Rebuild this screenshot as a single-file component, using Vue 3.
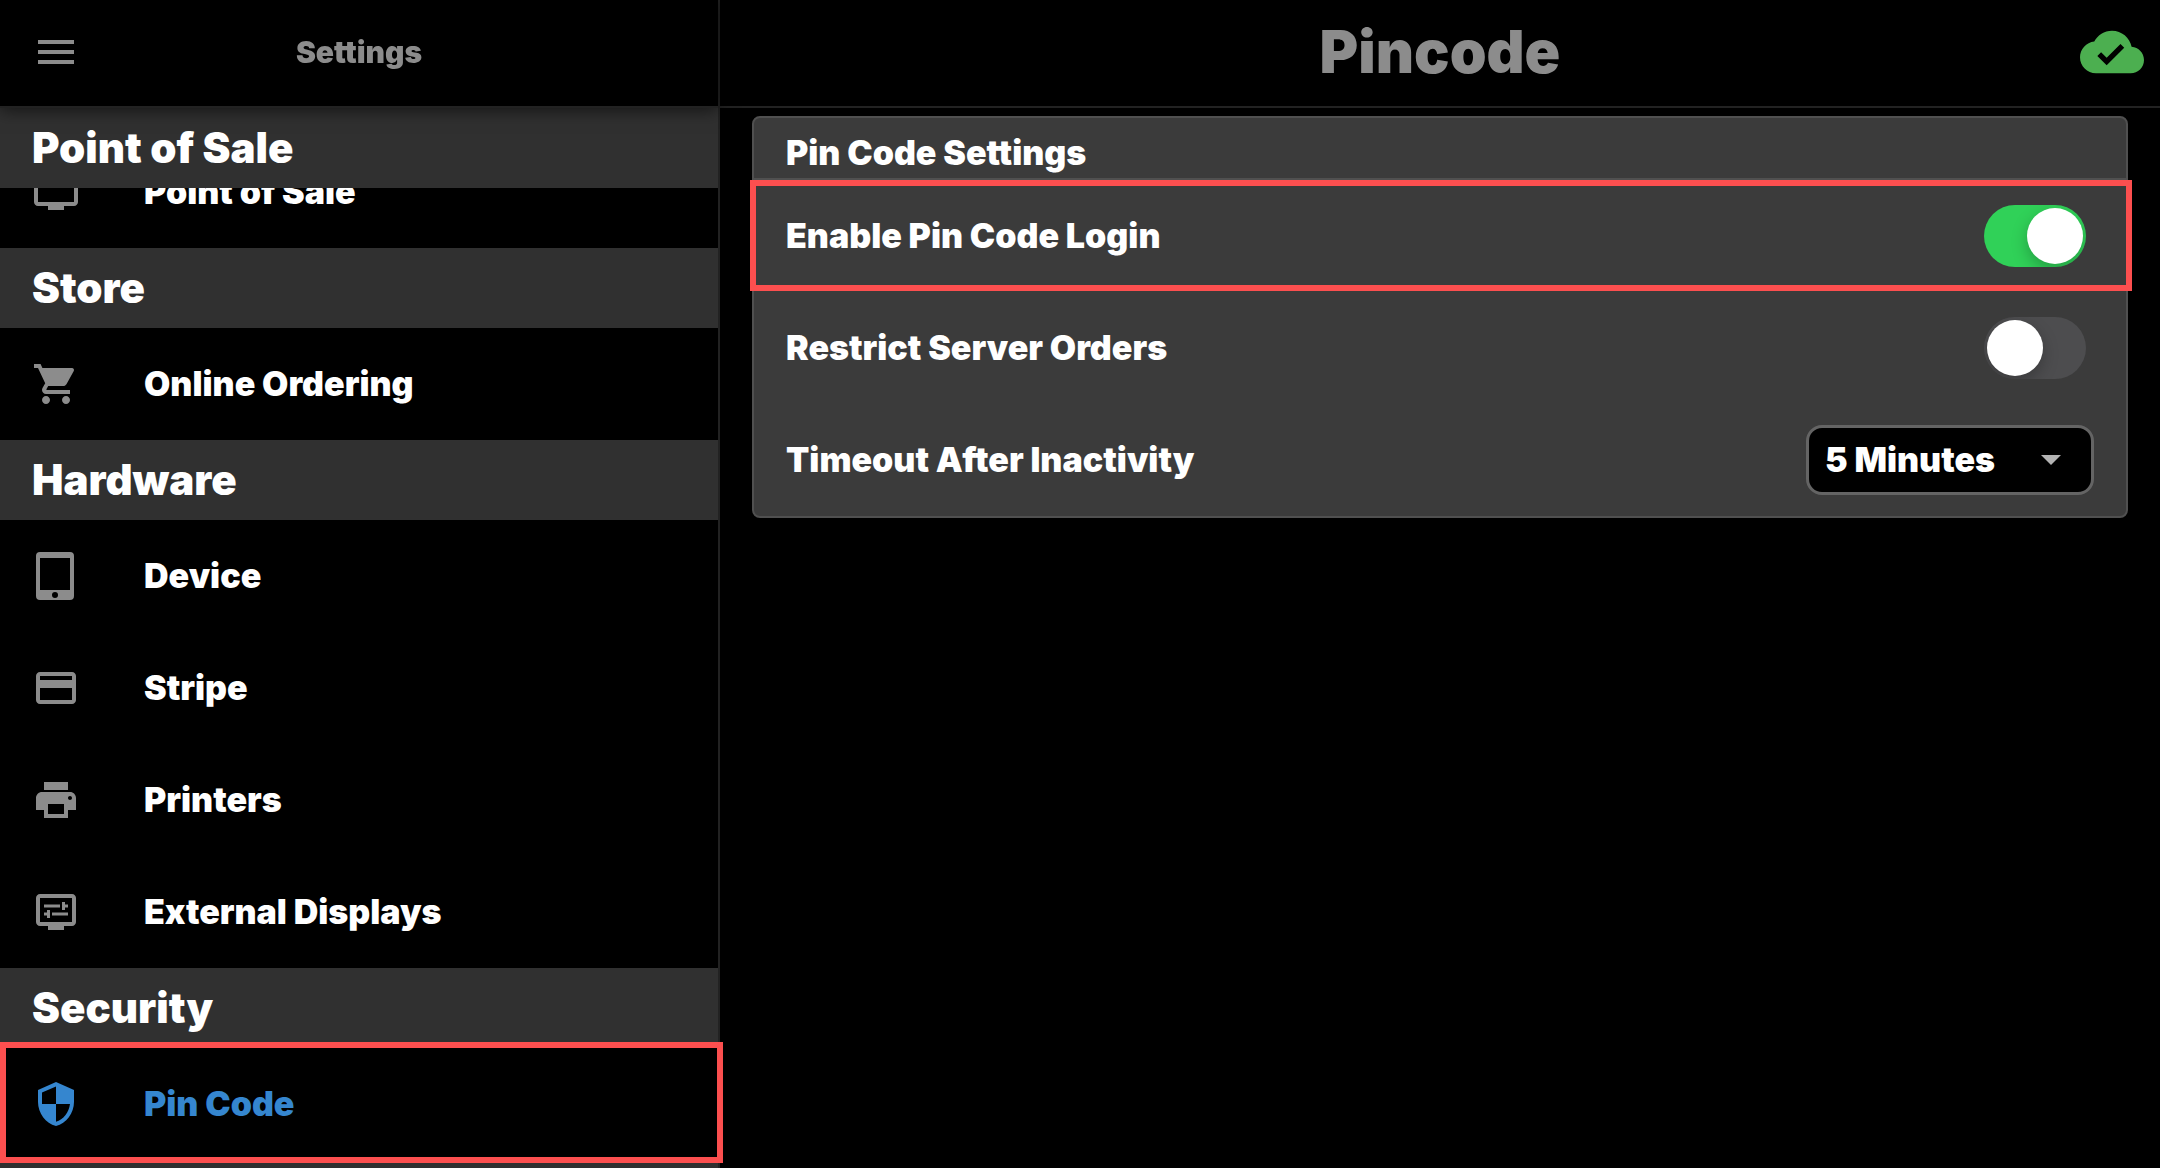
<script setup>
import { onMounted, ref } from 'vue'

const icons = {
  menu: 'M3 18h18v-2H3v2zm0-5h18v-2H3v2zm0-7v2h18V6H3z',
  monitor: 'M21 3H3c-1.1 0-2 .9-2 2v12c0 1.1.9 2 2 2h5v2h8v-2h5c1.1 0 2-.9 2-2V5c0-1.1-.9-2-2-2zm0 14H3V5h18v12z',
  cart: 'M7 18c-1.1 0-1.99.9-1.99 2S5.9 22 7 22s2-.9 2-2-.9-2-2-2zM1 2v2h2l3.6 7.59-1.35 2.45c-.16.28-.25.61-.25.96 0 1.1.9 2 2 2h12v-2H7.42c-.14 0-.25-.11-.25-.25l.03-.12.9-1.63h7.45c.75 0 1.41-.41 1.75-1.03l3.58-6.49A1.003 1.003 0 0 0 20 4H5.21l-.94-2H1zm16 16c-1.1 0-1.99.9-1.99 2s.89 2 1.99 2 2-.9 2-2-.9-2-2-2z',
  tablet: 'M19 0H4a2 2 0 0 0-2 2v20a2 2 0 0 0 2 2h15a2 2 0 0 0 2-2V2a2 2 0 0 0-2-2zm-7.5 23a1.5 1.5 0 1 1 0-3 1.5 1.5 0 0 1 0 3zM19 19H4V3h15v16z',
  card: 'M20 4H4c-1.11 0-1.99.89-1.99 2L2 18c0 1.11.89 2 2 2h16c1.11 0 2-.89 2-2V6c0-1.11-.89-2-2-2zm0 14H4v-6h16v6zm0-10H4V6h16v2z',
  printer: 'M19 8H5c-1.66 0-3 1.34-3 3v6h4v4h12v-4h4v-6c0-1.66-1.34-3-3-3zm-3 11H8v-5h8v5zm3-7c-.55 0-1-.45-1-1s.45-1 1-1 1 .45 1 1-.45 1-1 1zm-1-9H6v4h12V3z',
  display: 'M20 3H4c-1.1 0-2 .9-2 2v12c0 1.1.9 2 2 2h4v2h8v-2h4c1.1 0 2-.9 2-2V5c0-1.1-.9-2-2-2zm0 14H4V5h16v12zM6 8.25h8v1.5H6zM16.5 9.75H18v-1.5h-1.5V7H15v4h1.5zM10 12.25h8v1.5h-8zM7.5 15H9v-4H7.5v1.25H6v1.5h1.5z',
  shield: 'M12 1L3 5v6c0 5.55 3.84 10.74 9 12 5.16-1.26 9-6.45 9-12V5l-9-4zm0 10.99h7c-.53 4.12-3.28 7.79-7 8.94V12H5V6.3l7-3.11v8.8z',
  cloud: 'M19.35 10.04C18.67 6.59 15.64 4 12 4 9.11 4 6.6 5.64 5.35 8.04 2.34 8.36 0 10.91 0 14c0 3.31 2.69 6 6 6h13c2.76 0 5-2.24 5-5 0-2.64-2.05-4.78-4.65-4.96zM10 17l-3.5-3.5 1.41-1.41L10 14.17 15.18 9l1.41 1.41L10 17z',
}

const sections = [
  { title: 'Point of Sale', items: [{ label: 'Point of Sale', icon: 'monitor' }] },
  { title: 'Store', items: [{ label: 'Online Ordering', icon: 'cart' }] },
  {
    title: 'Hardware',
    items: [
      { label: 'Device', icon: 'tablet' },
      { label: 'Stripe', icon: 'card' },
      { label: 'Printers', icon: 'printer' },
      { label: 'External Displays', icon: 'display' },
    ],
  },
  { title: 'Security', items: [{ label: 'Pin Code', icon: 'shield', active: true }] },
]

const enabled = ref(true)
const restricted = ref(false)
const timeout = ref('5 Minutes')
const menu = ref(null)

// The list opens slightly scrolled, with the first heading pinned.
onMounted(() => {
  menu.value.scrollTop = 52
})
</script>

<template>
  <div class="app">
    <aside class="sidebar">
      <header class="bar side-bar">
        <button class="menu-button" type="button" aria-label="Menu">
          <svg class="icon" viewBox="0 0 24 24"><path :d="icons.menu" /></svg>
        </button>
        <h2 class="side-title">Settings</h2>
      </header>
      <nav ref="menu" class="menu">
        <section v-for="section in sections" :key="section.title">
          <h3 class="group">{{ section.title }}</h3>
          <a
            v-for="item in section.items"
            :key="item.label"
            href="#"
            class="item"
            :class="{ active: item.active }"
          >
            <svg class="icon" viewBox="0 0 24 24"><path fill-rule="evenodd" :d="icons[item.icon]" /></svg>
            <span>{{ item.label }}</span>
          </a>
        </section>
        <div class="group"></div>
      </nav>
    </aside>

    <main class="content">
      <header class="bar main-bar">
        <h1 class="page-title">Pincode</h1>
        <svg class="cloud" viewBox="0 0 24 24"><path :d="icons.cloud" /></svg>
      </header>
      <section class="card">
        <h2 class="card-title">Pin Code Settings</h2>
        <div class="row marked">
          <label for="enable">Enable Pin Code Login</label>
          <input id="enable" v-model="enabled" class="toggle" type="checkbox" />
        </div>
        <div class="row">
          <label for="restrict">Restrict Server Orders</label>
          <input id="restrict" v-model="restricted" class="toggle" type="checkbox" />
        </div>
        <div class="row">
          <label for="timeout">Timeout After Inactivity</label>
          <div class="select-wrap">
            <select id="timeout" v-model="timeout">
              <option>1 Minute</option>
              <option>5 Minutes</option>
              <option>10 Minutes</option>
            </select>
            <svg class="caret" viewBox="0 0 20 10"><path d="M0 0h20L10 10z" /></svg>
          </div>
        </div>
      </section>
    </main>
  </div>
</template>

<style>
body {
  margin: 0;
  background: #000;
}
</style>

<style scoped>
* {
  box-sizing: border-box;
}
.app {
  display: grid;
  grid-template-columns: 1fr 2fr;
  height: 100vh;
  overflow: hidden;
  background: #000;
  color: #fff;
  font: 900 34px/40px Inter, sans-serif;
  font-optical-sizing: none;
}
h1,
h2,
h3 {
  margin: 0;
  font-weight: 900;
}
.bar {
  display: flex;
  align-items: center;
  flex: none;
  height: 108px;
  padding-bottom: 2px;
  border-bottom: 2px solid #222;
  color: #8c8c8c;
}
.icon {
  display: block;
  flex: none;
  width: 48px;
  height: 48px;
  fill: #8c8c8c;
}
.sidebar {
  position: relative;
  z-index: 1;
  display: flex;
  flex-direction: column;
  min-width: 0;
  min-height: 0;
  border-right: 2px solid #222;
}
.side-bar {
  position: relative;
  z-index: 3;
  padding-left: 32px;
  padding-right: 80px;
  background: #000;
  box-shadow: 0 2px 16px rgba(0, 0, 0, 0.6);
}
.menu-button {
  padding: 0;
  border: 0;
  background: none;
}
.side-title {
  flex: 1;
  font-size: 30px;
  text-align: center;
}
/* The outline of the active item may overlap the divider by 5px. */
.menu {
  flex: 1;
  min-height: 0;
  margin-right: -5px;
  padding-right: 5px;
  overflow-y: auto;
  scrollbar-width: none;
}
.group {
  position: sticky;
  top: 0;
  z-index: 1;
  height: 80px;
  padding: 0 32px;
  background: #303030;
  font-size: 42px;
  line-height: 80px;
}
.item {
  position: relative;
  display: flex;
  align-items: center;
  gap: 64px;
  height: 112px;
  padding: 0 32px;
  color: #fff;
  text-decoration: none;
}
.item.active {
  color: #3586cf;
}
.item.active .icon {
  fill: #3586cf;
}
.item.active::after {
  content: '';
  position: absolute;
  z-index: 2;
  inset: -6px -5px -3px 0;
  border: 6px solid #fc4f4f;
}
.content {
  display: flex;
  flex-direction: column;
  min-width: 0;
}
.main-bar {
  padding-left: 80px;
  padding-right: 16px;
}
.page-title {
  flex: 1;
  font-size: 59px;
  line-height: 64px;
  text-align: center;
}
.cloud {
  width: 64px;
  height: 64px;
  fill: #4caf50;
}
.card {
  margin: 8px 32px;
  border: 2px solid #505050;
  border-radius: 8px;
  background: #3b3b3b;
}
.card-title {
  height: 62px;
  padding: 0 32px;
  border-bottom: 2px solid #505050;
  font-size: 34px;
  line-height: 70px;
}
.row {
  position: relative;
  display: flex;
  align-items: center;
  justify-content: space-between;
  height: 112px;
  padding: 0 32px;
}
.marked::after {
  content: '';
  position: absolute;
  inset: 0 -6px 1px -4px;
  border: 6px solid #fc4f4f;
  pointer-events: none;
}
.toggle {
  appearance: none;
  width: 102px;
  height: 62px;
  margin: 0 8px 0 0;
  padding: 3px;
  border-radius: 31px;
  background: #4d4d4f;
  overflow: hidden;
}
.toggle::before {
  content: '';
  display: block;
  width: 56px;
  height: 56px;
  border-radius: 50%;
  background: #fff;
  box-shadow: 0 6px 16px rgba(0, 0, 0, 0.25);
}
.toggle:checked {
  background: #30d158;
}
.toggle:checked::before {
  margin-left: 40px;
}
.select-wrap {
  position: relative;
}
select {
  display: block;
  appearance: none;
  width: 288px;
  height: 70px;
  padding: 0 16px;
  border: 3px solid #646464;
  border-radius: 16px;
  background: #000;
  color: #fff;
  font: inherit;
  font-optical-sizing: none;
}
.caret {
  position: absolute;
  top: 30px;
  right: 33px;
  width: 20px;
  height: 10px;
  fill: #b3b3b3;
  pointer-events: none;
}
</style>
